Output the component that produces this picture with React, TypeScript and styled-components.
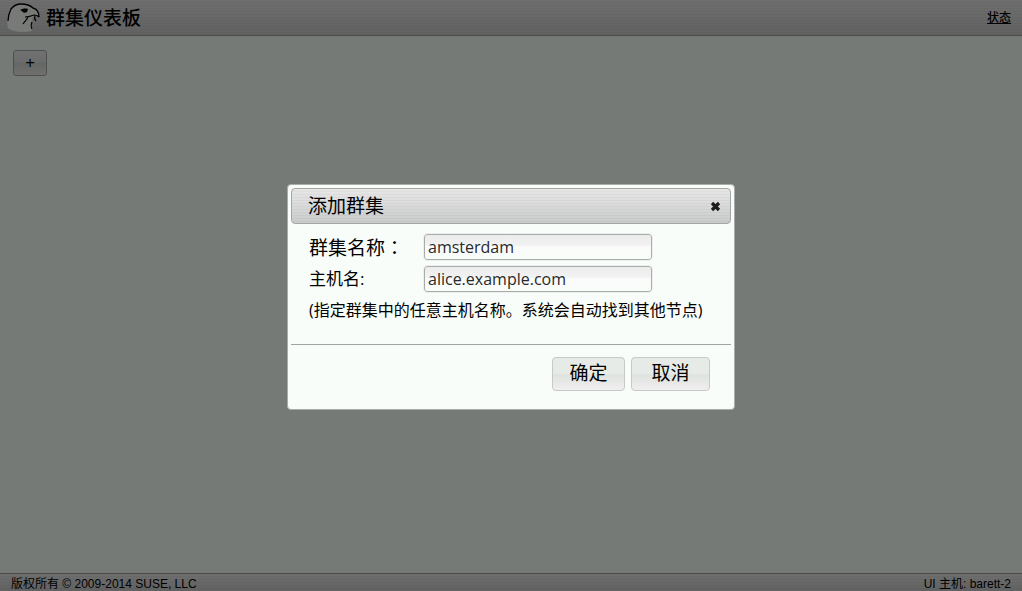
import React, { useState } from "react";
import styled, { createGlobalStyle, css } from "styled-components";

const cjk = `"Open Sans", "Noto Sans CJK SC", sans-serif`;

const GlobalStyle = createGlobalStyle`
  * { box-sizing: border-box; }
  body {
    margin: 0;
    background: #f7fff9;
    color: #000;
    font-family: ${cjk};
  }
`;

const brushedBar = css`
  background:
    repeating-linear-gradient(rgba(0, 0, 0, 0) 0 2px, rgba(0, 0, 0, 0.03) 2px 3px),
    linear-gradient(#e8e7e8, #c9ccca);
`;

const Page = styled.div`
  display: flex;
  flex-direction: column;
  min-height: 100vh;
`;

const Header = styled.header`
  display: flex;
  align-items: center;
  gap: 6px;
  height: 36px;
  padding: 0 11px 0 7px;
  border-bottom: 1px solid #9a9c9a;
  ${brushedBar}
`;

const Logo = styled.svg`
  width: 33px;
  height: 30px;
  flex: none;
`;

const Title = styled.h1`
  flex: 1;
  margin: 0;
  font-size: 19px;
  line-height: 26px;
  font-weight: 500;
`;

const StatusLink = styled.a`
  color: #000;
  font-size: 12px;
  line-height: 16px;
  font-weight: 500;
`;

const Main = styled.main`
  flex: 1;
  padding: 14px 13px;
`;

const AddButton = styled.button`
  display: block;
  width: 34px;
  height: 26px;
  padding: 0;
  border: 1px solid #a4a8a4;
  border-radius: 3px;
  background: linear-gradient(#ececec, #dcdfdc 50%, #d4d8d4 51%, #e6e9e6);
  font: 17px/24px "Open Sans", sans-serif;
`;

const Footer = styled.footer`
  display: flex;
  justify-content: space-between;
  height: 18px;
  padding: 0 11px;
  border-top: 1px solid #9a9c9a;
  font: 12px/20px "Liberation Sans", "Noto Sans CJK SC", sans-serif;
  ${brushedBar}
`;

const Overlay = styled.div`
  position: fixed;
  inset: 0;
  display: flex;
  align-items: center;
  justify-content: center;
  padding-top: 3px;
  background: rgba(0, 0, 0, 0.52);
`;

const Dialog = styled.form`
  width: 448px;
  max-width: 100%;
  padding: 3px;
  border: 1px solid #a9ada9;
  border-radius: 4px;
  background: #f8fdf9;
`;

const DialogHead = styled.div`
  display: flex;
  align-items: center;
  justify-content: space-between;
  height: 36px;
  padding: 0 9px 0 16px;
  border: 1px solid #a4a6a4;
  border-radius: 4px;
  ${brushedBar}
`;

const DialogTitle = styled.h2`
  margin: 0;
  font-size: 19px;
  line-height: 28px;
  font-weight: 400;
`;

const CloseButton = styled.button`
  display: flex;
  padding: 0;
  border: 0;
  background: none;
`;

const Fields = styled.div`
  display: flex;
  flex-direction: column;
  padding: 8px 18px 20px;
`;

const Field = styled.div`
  display: flex;
  align-items: center;
  height: 32px;
  padding-bottom: 2px;
`;

const Label = styled.label<{ $size: number }>`
  width: 115px;
  font-size: ${(p) => p.$size}px;
  line-height: 28px;
`;

const Colon = styled.span`
  font-family: "Noto Sans CJK TC", sans-serif;
`;

const Input = styled.input`
  width: 228px;
  height: 26px;
  padding: 0 3px;
  border: 1px solid #a9ada9;
  border-radius: 3px;
  outline: 1px solid #ecefec;
  background: linear-gradient(#ececec, #f1f2f1 44%, #fafafa 46%, #f8fdf9);
  color: #2a2a2a;
  font: 16px/24px "Open Sans", sans-serif;
`;

const Hint = styled.p`
  margin: 0;
  font-size: 16px;
  line-height: 28px;
  white-space: nowrap;
`;

const Actions = styled.div`
  display: flex;
  justify-content: flex-end;
  gap: 6px;
  padding: 12px 21px 15px;
  border-top: 1px solid #a0a4a0;
`;

const ActionButton = styled.button<{ $width: number }>`
  width: ${(p) => p.$width}px;
  height: 34px;
  padding: 0 0 2px;
  border: 1px solid #c6c9c6;
  border-radius: 4px;
  background: linear-gradient(#e6ebe7, #e6ebe7 50%, #dfe3df 51%, #e4e6e4 70%, #f0f0f0);
  color: #000;
  font: 19px/28px ${cjk};
`;

function BirdLogo() {
  return (
    <Logo viewBox="0 0 33 30" aria-hidden="true">
      <path
        d="M1 25C0 22 0 17 1 13C3 6 7 1 14 1C20 1 23 2 26 5C30 6 32 9 32 13L28 13L25 15C25 18 24 21 24 24L25 28C17 30 6 29 1 25Z"
        fill="#fafffa"
      />
      <path
        d="M1 18C1 13 2 10 4 6C7 2 10 1 14 1C20 1 23 2 26 5C30 6 32 9 32 14"
        fill="none"
        stroke="#000"
        strokeWidth="1.3"
      />
      <path
        d="M18 14C22 14 24 13 27 12C29 12 31 13 32 14M28 13C27 15 28 17 29 18M21 14C20 17 18 18 16 21M25 19C24 21 24 24 25 26"
        fill="none"
        stroke="#000"
        strokeWidth="1.1"
      />
      <path d="M13 7C15 6 18 5 21 6L20 9C18 10 16 10 15 8Z" fill="#000" />
    </Logo>
  );
}

export default function App() {
  const [name, setName] = useState("amsterdam");
  const [host, setHost] = useState("alice.example.com");

  return (
    <>
      <GlobalStyle />
      <Page lang="zh-CN">
        <Header>
          <BirdLogo />
          <Title>群集仪表板</Title>
          <StatusLink href="#status">状态</StatusLink>
        </Header>
        <Main>
          <AddButton type="button">+</AddButton>
        </Main>
        <Footer>
          <span>版权所有 © 2009-2014 SUSE, LLC</span>
          <span>UI 主机: barett-2</span>
        </Footer>
      </Page>
      <Overlay lang="zh-CN">
        <Dialog role="dialog" aria-modal="true" aria-labelledby="dialog-title" onSubmit={(e) => e.preventDefault()}>
          <DialogHead>
            <DialogTitle id="dialog-title">添加群集</DialogTitle>
            <CloseButton type="button" aria-label="关闭">
              <svg width="11" height="11" viewBox="0 0 11 11">
                <path d="M2 2L9 9M9 2L2 9" stroke="#1c1c1c" strokeWidth="3.2" />
              </svg>
            </CloseButton>
          </DialogHead>
          <Fields>
            <Field>
              <Label htmlFor="cluster" $size={19}>
                群集名称<Colon lang="zh-TW">：</Colon>
              </Label>
              <Input id="cluster" value={name} onChange={(e) => setName(e.target.value)} />
            </Field>
            <Field>
              <Label htmlFor="host" $size={17}>主机名:</Label>
              <Input id="host" value={host} onChange={(e) => setHost(e.target.value)} />
            </Field>
            <Hint>(指定群集中的任意主机名称。系统会自动找到其他节点)</Hint>
          </Fields>
          <Actions>
            <ActionButton type="submit" $width={73}>确定</ActionButton>
            <ActionButton type="button" $width={79}>取消</ActionButton>
          </Actions>
        </Dialog>
      </Overlay>
    </>
  );
}
